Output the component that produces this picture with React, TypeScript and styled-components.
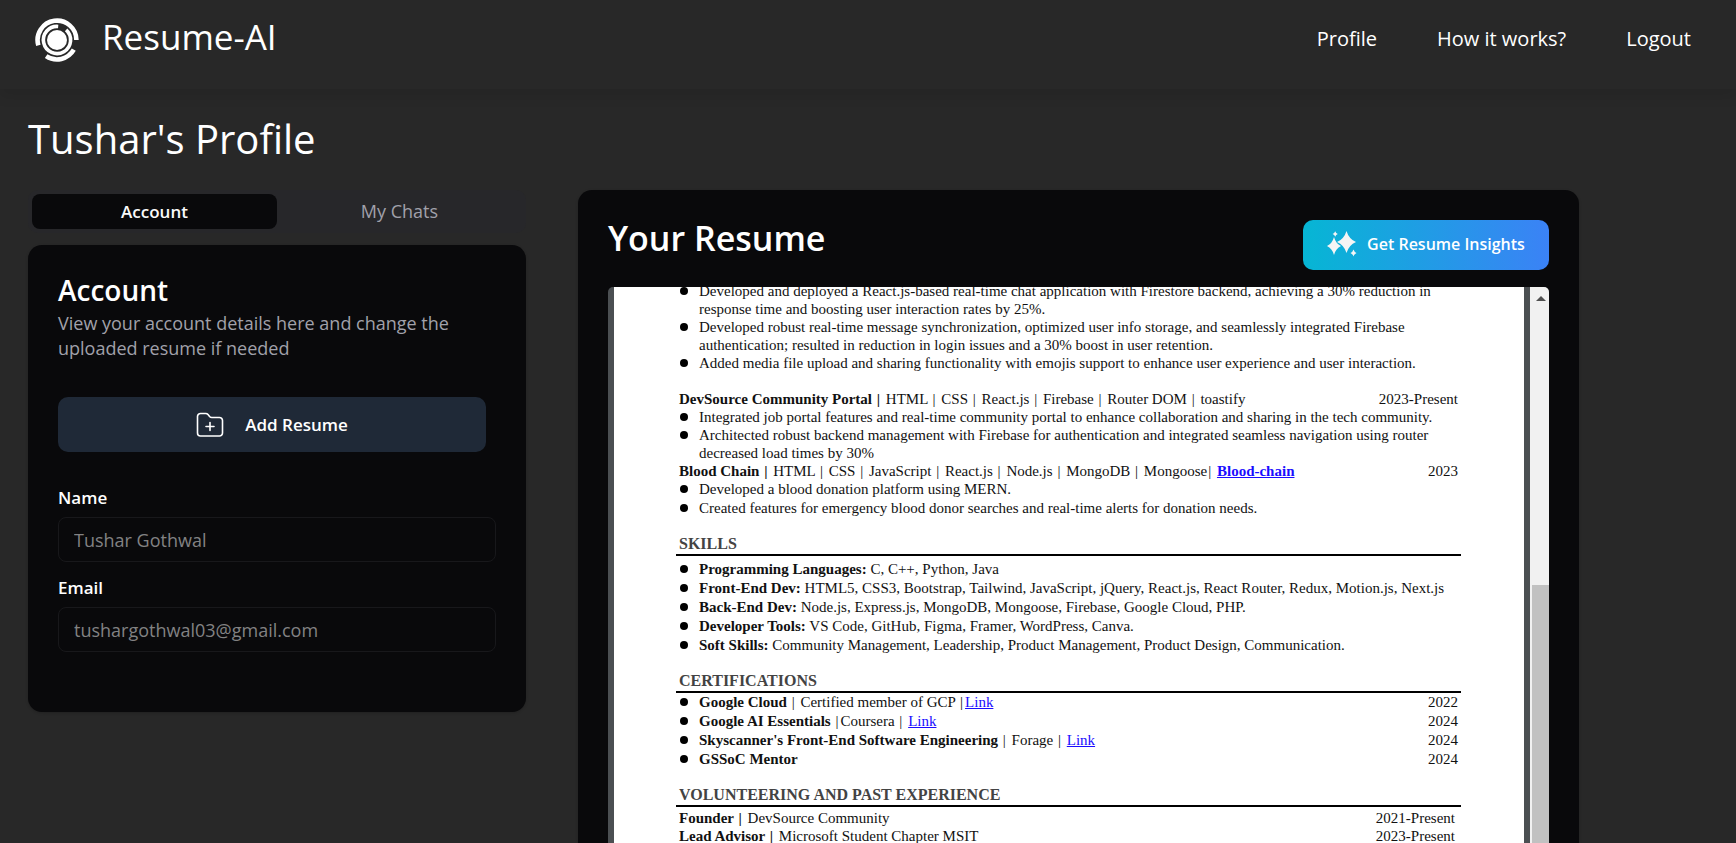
import React from "react";
import styled, { createGlobalStyle, css } from "styled-components";

const sans = `"Open Sans", "Noto Sans", sans-serif`;
const serif = `"Liberation Serif", "Times New Roman", serif`;

const GlobalStyle = createGlobalStyle`
  *, *::before, *::after { box-sizing: border-box; }
  body { margin: 0; background: #282828; color: #fff; font-family: ${sans}; }
  h1, h2, h3, p, ul { margin: 0; padding: 0; }
  button, input { font: inherit; }
`;

const Page = styled.div`
  display: flex;
  flex-direction: column;
  height: 100vh;
  overflow: hidden;
`;

const Header = styled.header`
  display: flex;
  align-items: center;
  justify-content: space-between;
  flex: none;
  height: 89px;
  padding: 0 45px 10px 34px;
  box-shadow: 0 8px 12px rgba(0, 0, 0, 0.08);
`;

const Brand = styled.a`
  display: flex;
  align-items: center;
  gap: 22px;
  color: #fff;
  text-decoration: none;
`;

const BrandName = styled.span`
  padding-bottom: 5px;
  font-size: 35px;
  line-height: 40px;
`;

const Nav = styled.nav`
  display: flex;
  gap: 60px;
  padding-bottom: 2px;
`;

const NavLink = styled.a`
  color: #fff;
  text-decoration: none;
  font-size: 20px;
  font-weight: 500;
  line-height: 28px;
`;

const Main = styled.main`
  display: flex;
  flex-direction: column;
  flex: 1;
  min-height: 0;
  padding: 24px 157px 0 28px;
`;

const PageTitle = styled.h1`
  font-size: 40px;
  font-weight: 400;
  line-height: 52px;
`;

const Columns = styled.div`
  display: grid;
  grid-template-columns: minmax(0, 1fr) minmax(0, 2.01fr);
  gap: 52px;
  flex: 1;
  min-height: 0;
  margin-top: 25px;
`;

const Sidebar = styled.section`
  display: flex;
  flex-direction: column;
  gap: 12px;
`;

const TabList = styled.div`
  display: grid;
  grid-template-columns: 1fr 1fr;
  padding: 4px;
  border-radius: 10px;
  background: #27272a;
`;

const Tab = styled.button<{ $active?: boolean }>`
  height: 35px;
  border: 0;
  border-radius: 8px;
  padding: 0 16px;
  background: ${(p) => (p.$active ? "#09090b" : "transparent")};
  color: ${(p) => (p.$active ? "#fafafa" : "#a1a1aa")};
  font-size: ${(p) => (p.$active ? 17 : 18)}px;
  font-weight: ${(p) => (p.$active ? 600 : 400)};
  line-height: 25px;
`;

const cardSurface = css`
  background: #09090b;
  box-shadow: 0 1px 3px rgba(0, 0, 0, 0.2);
`;

const AccountCard = styled.div`
  ${cardSurface}
  padding: 30px 30px 60px;
  border-radius: 14px;
`;

const CardTitle = styled.h2`
  font-size: 28px;
  font-weight: 600;
  line-height: 30px;
`;

const CardText = styled.p`
  padding-top: 6px;
  color: #a1a1aa;
  font-size: 18px;
  line-height: 25px;
`;

const AddButton = styled.button`
  display: flex;
  align-items: center;
  justify-content: center;
  gap: 21px;
  width: calc(100% - 10px);
  height: 55px;
  margin: 36px 0 33px;
  border: 0;
  border-radius: 10px;
  background: #1f2937;
  color: #fff;
  font-size: 17px;
  font-weight: 600;
`;

const Field = styled.div`
  display: flex;
  flex-direction: column;
  gap: 7px;

  & + & {
    margin-top: 13px;
  }
`;

const Label = styled.label`
  font-size: 17px;
  font-weight: 600;
  line-height: 25px;
`;

const TextInput = styled.input`
  width: 100%;
  height: 45px;
  padding: 0 15px;
  border: 1px solid #18181b;
  border-radius: 8px;
  background: transparent;
  color: #828283;
  font-size: 18px;
`;

const ResumeCard = styled.section`
  ${cardSurface}
  display: flex;
  flex-direction: column;
  min-height: 0;
  padding: 30px 30px 0;
  border-radius: 14px 14px 0 0;
`;

const ResumeHeader = styled.div`
  display: flex;
  align-items: flex-start;
  justify-content: space-between;
  padding-bottom: 17px;
`;

const ResumeTitle = styled.h2`
  font-size: 34px;
  font-weight: 600;
  line-height: 36px;
`;

const InsightsButton = styled.button`
  display: flex;
  align-items: center;
  justify-content: center;
  gap: 10px;
  width: 246px;
  height: 50px;
  padding: 0 0 2px;
  border: 0;
  border-radius: 10px;
  background: linear-gradient(90deg, #06b6d4, #3b82f6);
  color: #fff;
  font-size: 16px;
  font-weight: 600;
`;

const Viewer = styled.div`
  display: flex;
  flex: 1;
  min-height: 0;
  overflow: hidden;
  border-radius: 5px 5px 0 0;
  background: #4b4f52;
`;

const Sheet = styled.article`
  flex: 1;
  min-width: 0;
  overflow: hidden;
  margin: 0 6px;
  padding: 0 63px 0 62px;
  background: #fff;
  color: #111;
  font-family: ${serif};
  font-size: 15px;
  line-height: 18px;
`;

const SheetBody = styled.div`
  margin-top: -5px;
`;

const Bullets = styled.ul<{ $gap?: number }>`
  display: flex;
  flex-direction: column;
  gap: ${(p) => p.$gap ?? 0}px;
  padding: 0 3px 0 23px;
  list-style: none;
`;

const Bullet = styled.li`
  display: flex;
  justify-content: space-between;

  &::before {
    content: "";
    flex: none;
    width: 8px;
    height: 8px;
    margin: 5px 11px 0 -19px;
    border-radius: 50%;
    background: #000;
  }

  & > div {
    flex: 1;
    white-space: nowrap;
  }
`;

const Entry = styled.div<{ $inset?: boolean; $spaced?: boolean }>`
  display: flex;
  justify-content: space-between;
  padding: 0 ${(p) => (p.$inset ? 6 : 3)}px 0 3px;
  margin-top: ${(p) => (p.$spaced ? 18 : 0)}px;
`;

const SectionTitle = styled.h3<{ $after: number }>`
  margin: 17px 0 ${(p) => p.$after}px;
  padding: 0 3px;
  border-bottom: 2px solid #000;
  color: #434343;
  font-size: 16px;
  font-weight: 700;
  line-height: 20px;
`;

const DocLink = styled.a`
  color: #1a0dff;
  text-decoration: underline;
`;

const Divider = styled.span`
  margin: 0 2px 0 1px;
`;

const ScrollTrack = styled.div`
  display: flex;
  flex-direction: column;
  align-items: flex-end;
  flex: none;
  width: 19px;
  background: #f1f1f1;
`;

const ScrollArrow = styled.div`
  align-self: center;
  width: 0;
  height: 0;
  margin: 9px 0 0 2px;
  border: 5px solid transparent;
  border-top-width: 0;
  border-bottom-color: #505050;
`;

const ScrollThumb = styled.div`
  flex: 1;
  width: 17px;
  margin-top: 284px;
  background: #c1c1c1;
`;

const arc = (r: number, from: number, to: number) => {
  const pt = (deg: number) => {
    const a = (deg * Math.PI) / 180;
    return `${(22 + r * Math.cos(a)).toFixed(2)} ${(22 + r * Math.sin(a)).toFixed(2)}`;
  };
  return `M${pt(from)}A${r} ${r} 0 ${to - from > 180 ? 1 : 0} 1 ${pt(to)}`;
};

const Logo = () => (
  <svg width="46" height="44" viewBox="-1 0 46 44" fill="none" stroke="#fff" aria-hidden="true">
    <circle cx="22" cy="22" r="10" fill="#fff" stroke="none" />
    <path d={arc(13.6, -48, 275)} strokeWidth="3.6" />
    <path d={arc(19.4, 164, 360)} strokeWidth="4.6" />
    <path d={arc(19.4, 30, 124)} strokeWidth="4.6" />
  </svg>
);

const star = (x: number, y: number, w: number, h: number) =>
  `M${x} ${y - h}Q${x + w * 0.26} ${y - h * 0.26} ${x + w} ${y}Q${x + w * 0.26} ${y + h * 0.26} ${x} ${y + h}Q${x - w * 0.26} ${y + h * 0.26} ${x - w} ${y}Q${x - w * 0.26} ${y - h * 0.26} ${x} ${y - h}Z`;

const SparkleIcon = () => (
  <svg width="30" height="28" viewBox="0 0 30 28" fill="#f5f5f5" aria-hidden="true">
    <path d={star(19.5, 12, 9.5, 11)} />
    <path d={star(7, 16, 7, 9)} />
    <path d={star(8.2, 4, 2.6, 2.8)} />
    <path d={star(26.5, 23, 3, 3.4)} />
  </svg>
);

const FolderPlusIcon = () => (
  <svg width="28" height="26" viewBox="0 0 28 26" fill="none" stroke="#fff" strokeWidth="1.6" strokeLinecap="round" strokeLinejoin="round" aria-hidden="true">
    <path d="M1.5 4.5a3 3 0 0 1 3-3h5.2a3 3 0 0 1 2.3 1.1l1.6 1.9a3 3 0 0 0 2.2 1h7.7a3 3 0 0 1 3 3v12.5a3 3 0 0 1-3 3h-19a3 3 0 0 1-3-3z" />
    <path d="M14 10.5v8M10 14.5h8" />
  </svg>
);

const Piped = ({ text }: { text: string }) => (
  <>
    {text.split("|").map((part, i) => (
      <React.Fragment key={i}>
        {i > 0 && <Divider>|</Divider>}
        {part}
      </React.Fragment>
    ))}
  </>
);

const skills = [
  ["Programming Languages:", "C, C++, Python, Java"],
  ["Front-End Dev:", "HTML5, CSS3, Bootstrap, Tailwind, JavaScript, jQuery, React.js, React Router, Redux, Motion.js, Next.js"],
  ["Back-End Dev:", "Node.js, Express.js, MongoDB, Mongoose, Firebase, Google Cloud, PHP."],
  ["Developer Tools:", "VS Code, GitHub, Figma, Framer, WordPress, Canva."],
  ["Soft Skills:", "Community Management, Leadership, Product Management, Product Design, Communication."],
];

const certifications = [
  { name: "Google Cloud", detail: " | Certified member of GCP |", link: true, year: "2022" },
  { name: "Google AI Essentials", detail: " |Coursera | ", link: true, year: "2024" },
  { name: "Skyscanner's Front-End Software Engineering", detail: " | Forage | ", link: true, year: "2024" },
  { name: "GSSoC Mentor", detail: "", link: false, year: "2024" },
];

const ResumeDocument = () => (
  <Sheet>
    <SheetBody>
      <Bullets>
        <Bullet>
          <div>
            Developed and deployed a React.js-based real-time chat application with Firestore backend, achieving a 30% reduction in
            <br />
            response time and boosting user interaction rates by 25%.
          </div>
        </Bullet>
        <Bullet>
          <div>
            Developed robust real-time message synchronization, optimized user info storage, and seamlessly integrated Firebase
            <br />
            authentication; resulted in reduction in login issues and a 30% boost in user retention.
          </div>
        </Bullet>
        <Bullet>
          <div>Added media file upload and sharing functionality with emojis support to enhance user experience and user interaction.</div>
        </Bullet>
      </Bullets>

      <Entry $spaced>
        <span>
          <b>
            <Piped text="DevSource Community Portal |" />
          </b>{" "}
          <Piped text="HTML | CSS | React.js | Firebase | Router DOM | toastify" />
        </span>
        <span>2023-Present</span>
      </Entry>
      <Bullets>
        <Bullet>
          <div>Integrated job portal features and real-time community portal to enhance collaboration and sharing in the tech community.</div>
        </Bullet>
        <Bullet>
          <div>
            Architected robust backend management with Firebase for authentication and integrated seamless navigation using router
            <br />
            decreased load times by 30%
          </div>
        </Bullet>
      </Bullets>
      <Entry>
        <span>
          <b>
            <Piped text="Blood Chain |" />
          </b>{" "}
          <Piped text="HTML | CSS | JavaScript | React.js | Node.js | MongoDB | Mongoose| " />
          <DocLink href="#blood-chain">
            <b>Blood-chain</b>
          </DocLink>
        </span>
        <span>2023</span>
      </Entry>
      <Bullets $gap={1}>
        <Bullet>
          <div>Developed a blood donation platform using MERN.</div>
        </Bullet>
        <Bullet>
          <div>Created features for emergency blood donor searches and real-time alerts for donation needs.</div>
        </Bullet>
      </Bullets>

      <SectionTitle $after={4}>SKILLS</SectionTitle>
      <Bullets $gap={1}>
        {skills.map(([name, list]) => (
          <Bullet key={name}>
            <div>
              <b>{name}</b> {list}
            </div>
          </Bullet>
        ))}
      </Bullets>

      <SectionTitle $after={0}>CERTIFICATIONS</SectionTitle>
      <Bullets $gap={1}>
        {certifications.map((c) => (
          <Bullet key={c.name}>
            <div>
              <b>{c.name}</b>
              <Piped text={c.detail} />
              {c.link && <DocLink href="#certificate">Link</DocLink>}
            </div>
            <span>{c.year}</span>
          </Bullet>
        ))}
      </Bullets>

      <SectionTitle $after={2}>VOLUNTEERING AND PAST EXPERIENCE</SectionTitle>
      <Entry $inset>
        <span>
          <b>
            <Piped text="Founder |" />
          </b>{" "}
          DevSource Community
        </span>
        <span>2021-Present</span>
      </Entry>
      <Entry $inset>
        <span>
          <b>
            <Piped text="Lead Advisor |" />
          </b>{" "}
          Microsoft Student Chapter MSIT
        </span>
        <span>2023-Present</span>
      </Entry>
    </SheetBody>
  </Sheet>
);

export default function App() {
  return (
    <>
      <GlobalStyle />
      <Page>
        <Header>
          <Brand href="#home">
            <Logo />
            <BrandName>Resume-AI</BrandName>
          </Brand>
          <Nav>
            <NavLink href="#profile">Profile</NavLink>
            <NavLink href="#how">How it works?</NavLink>
            <NavLink href="#logout">Logout</NavLink>
          </Nav>
        </Header>
        <Main>
          <PageTitle>Tushar's Profile</PageTitle>
          <Columns>
            <Sidebar>
              <TabList role="tablist">
                <Tab $active role="tab" aria-selected="true">Account</Tab>
                <Tab role="tab" aria-selected="false">My Chats</Tab>
              </TabList>
              <AccountCard>
                <CardTitle>Account</CardTitle>
                <CardText>View your account details here and change the uploaded resume if needed</CardText>
                <AddButton type="button">
                  <FolderPlusIcon />
                  Add Resume
                </AddButton>
                <Field>
                  <Label htmlFor="name">Name</Label>
                  <TextInput id="name" readOnly value="Tushar Gothwal" />
                </Field>
                <Field>
                  <Label htmlFor="email">Email</Label>
                  <TextInput id="email" type="email" readOnly value="tushargothwal03@gmail.com" />
                </Field>
              </AccountCard>
            </Sidebar>
            <ResumeCard>
              <ResumeHeader>
                <ResumeTitle>Your Resume</ResumeTitle>
                <InsightsButton type="button">
                  <SparkleIcon />
                  Get Resume Insights
                </InsightsButton>
              </ResumeHeader>
              <Viewer>
                <ResumeDocument />
                <ScrollTrack aria-hidden="true">
                  <ScrollArrow />
                  <ScrollThumb />
                </ScrollTrack>
              </Viewer>
            </ResumeCard>
          </Columns>
        </Main>
      </Page>
    </>
  );
}
